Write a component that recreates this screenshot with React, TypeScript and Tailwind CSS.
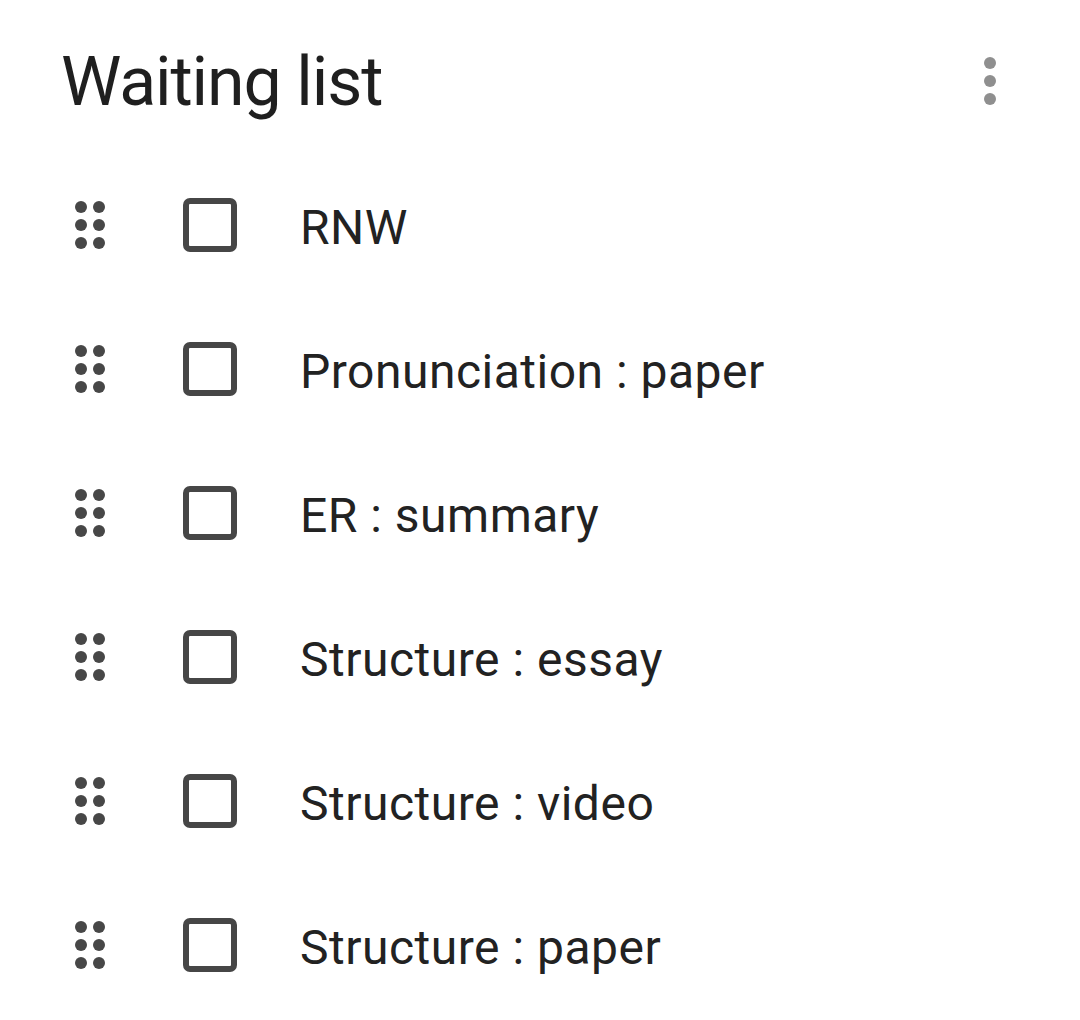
import React from "react";

const items = [
  "RNW",
  "Pronunciation : paper",
  "ER : summary",
  "Structure : essay",
  "Structure : video",
  "Structure : paper",
];

function DragHandle() {
  return (
    <svg width="30" height="48" viewBox="0 0 30 48" className="shrink-0">
      {[6, 24, 42].map((y) =>
        [6, 24].map((x) => <circle key={`${x}-${y}`} cx={x} cy={y} r="6" fill="#474747" />)
      )}
    </svg>
  );
}

function Kebab() {
  return (
    <svg width="12" height="48" viewBox="0 0 12 48">
      {[6, 24, 42].map((y) => (
        <circle key={y} cx="6" cy={y} r="6" fill="#8f8f8f" />
      ))}
    </svg>
  );
}

export default function App() {
  return (
    <div
      className="w-[1080px] h-[1020px] bg-white overflow-hidden"
      style={{ fontFamily: "Roboto, 'Open Sans', sans-serif" }}
    >
      <div className="h-[153px] flex items-start justify-between pl-[61px] pr-[84px]">
        <div className="pt-[48px] text-[68px] leading-[68px] text-[#1f1f1f] tracking-[-1.1px]">
          Waiting list
        </div>
        <div className="pt-[57px]">
          <Kebab />
        </div>
      </div>
      <div className="flex flex-col">
        {items.map((t) => (
          <div key={t} className="h-[144px] flex items-center">
            <div className="pl-[75px] w-[183px] flex">
              <DragHandle />
            </div>
            <div className="w-[54px] h-[54px] border-[6px] border-[#464646] rounded-[7px] shrink-0" />
            <div className="pl-[63px] pt-[6px] text-[48px] leading-[48px] tracking-[0.5px] text-[#222222]">
              {t}
            </div>
          </div>
        ))}
      </div>
    </div>
  );
}
